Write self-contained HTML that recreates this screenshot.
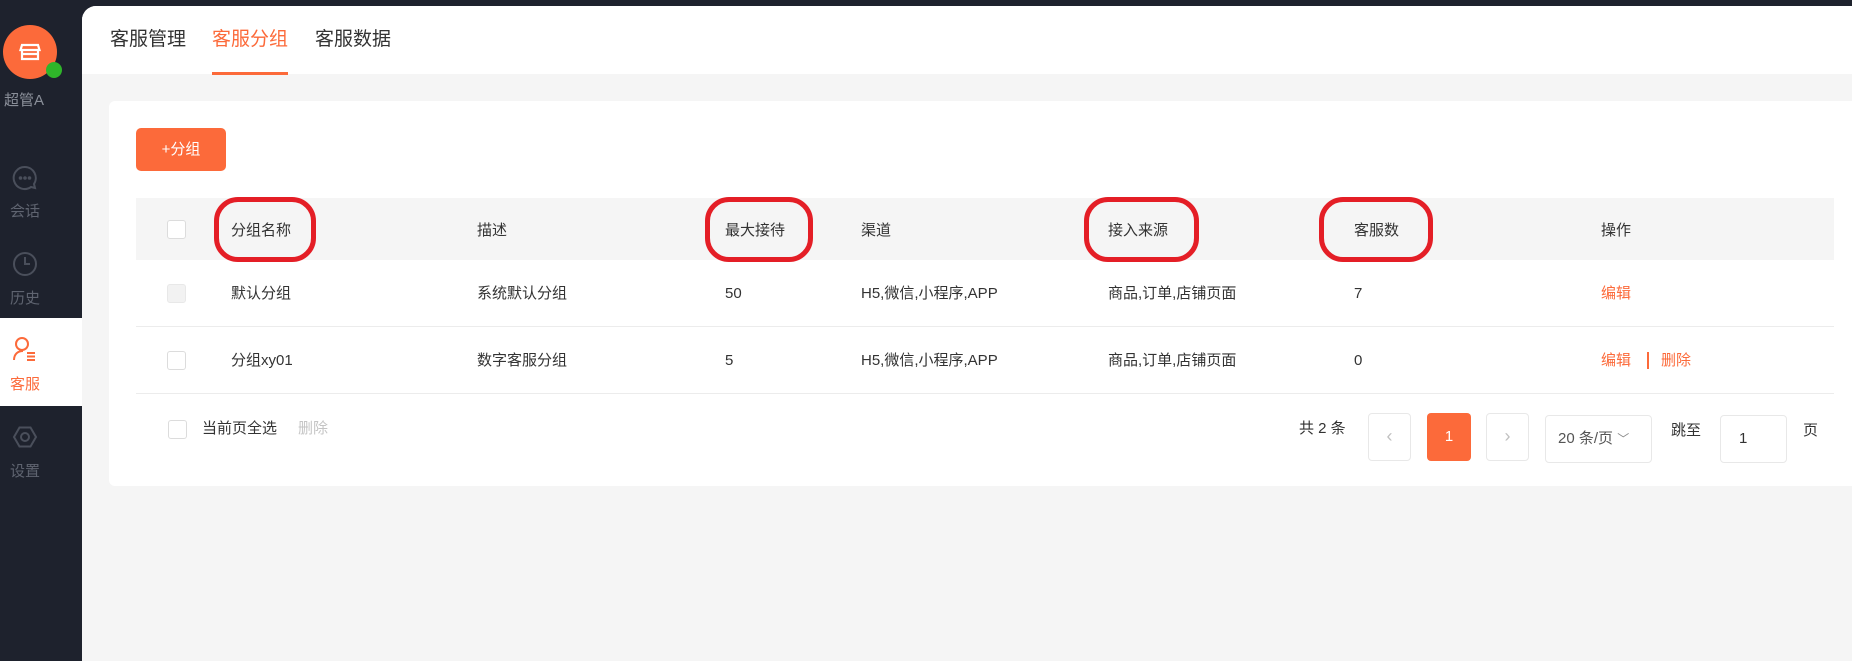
<!DOCTYPE html>
<html><head><meta charset="utf-8"><style>
*{margin:0;padding:0;box-sizing:border-box}
body{width:1852px;height:661px;overflow:hidden;background:#1e222d;font-family:"Liberation Sans","Noto Sans CJK SC",sans-serif;font-size:15px;line-height:22px;color:#333;position:relative}
.a{position:absolute;white-space:nowrap}
.main{position:absolute;left:82px;top:6px;width:1770px;height:655px;background:#f5f5f5;border-top-left-radius:14px;overflow:hidden}
.hdr{position:absolute;left:0;top:0;width:100%;height:68px;background:#fff}
.tab{position:absolute;top:20px;font-size:19px;line-height:28px;color:#333}
.card{position:absolute;left:109px;top:101px;width:1760px;height:385px;background:#fff;border-radius:6px}
.cb{position:absolute;width:19px;height:19px;border:1px solid #dcdcdc;border-radius:3px;background:#fff}
.circ{position:absolute;border:5px solid #e41e26;border-radius:24px}
.pb{position:absolute;border:1px solid #e8e8e8;border-radius:4px;background:#fff}
.side{position:absolute;left:0;width:82px;text-align:center;color:#5f6470;font-size:15px}
</style></head><body>
<div class="a" style="left:3px;top:25px;width:54px;height:54px;border-radius:50%;background:#fc6a3a"></div>
<svg class="a" style="left:18px;top:40px" width="24" height="24" viewBox="0 0 24 24" fill="none" stroke="#fff" stroke-width="2.2"><path d="M4 5h16l1.5 5H2.5z"/><path d="M4 10v9h16v-9M4 14h16"/></svg>
<div class="a" style="left:46px;top:62px;width:16px;height:16px;border-radius:50%;background:#2fb52a"></div>
<div class="a" style="left:4px;top:90px;color:#8a8f99;font-size:15px">超管A</div>
<svg class="a" style="left:12px;top:165px" width="26" height="26" viewBox="0 0 26 26" fill="none" stroke="#4a4f5b" stroke-width="2"><path d="M13 2a11 11 0 1 0 6 20l4 1-1-4A11 11 0 0 0 13 2z"/><circle cx="8.5" cy="13" r=".8" fill="#4a4f5b"/><circle cx="13" cy="13" r=".8" fill="#4a4f5b"/><circle cx="17.5" cy="13" r=".8" fill="#4a4f5b"/></svg>
<div class="side a" style="top:201px;left:-16px">会话</div>
<svg class="a" style="left:12px;top:251px" width="26" height="26" viewBox="0 0 26 26" fill="none" stroke="#4a4f5b" stroke-width="2"><circle cx="13" cy="13" r="11"/><path d="M13 6v7h5"/></svg>
<div class="side a" style="top:288px;left:-16px">历史</div>
<div class="a" style="left:0;top:318px;width:82px;height:88px;background:#fff"></div>
<svg class="a" style="left:12px;top:336px" width="26" height="26" viewBox="0 0 26 26" fill="none" stroke="#fc6a3a" stroke-width="2"><circle cx="10" cy="8" r="6"/><path d="M2 24c0-6 4-9 9-9"/><path d="M15 17h8M15 20.5h8M15 24h8"/></svg>
<div class="side a" style="top:374px;left:-16px;color:#fc6a3a">客服</div>
<svg class="a" style="left:12px;top:424px" width="26" height="26" viewBox="0 0 26 26" fill="none" stroke="#4a4f5b" stroke-width="2"><path d="M7.5 3.5h11L24 13l-5.5 9.5h-11L2 13z"/><circle cx="13" cy="13" r="4"/></svg>
<div class="side a" style="top:461px;left:-16px">设置</div>

<div class="main">
<div class="hdr">
<div class="tab" style="left:28px">客服管理</div>
<div class="tab" style="left:130px;color:#fc6a3a">客服分组</div>
<div class="tab" style="left:233px">客服数据</div>
<div class="a" style="left:130px;top:66px;width:76px;height:3px;background:#fc6a3a"></div>
</div>
</div>

<div class="card" style="left:109px"></div>
<div class="a" style="left:136px;top:128px;width:90px;height:43px;background:#fc6a3a;border-radius:5px;color:#fff;text-align:center;line-height:43px;font-size:15px">+分组</div>

<div class="a" style="left:136px;top:198px;width:1698px;height:62px;background:#f5f5f5"></div>
<div class="a" style="left:136px;top:326px;width:1698px;height:1px;background:#ececec"></div>
<div class="a" style="left:136px;top:393px;width:1698px;height:1px;background:#ececec"></div>

<div class="cb" style="left:167px;top:220px"></div>
<div class="cb" style="left:167px;top:284px;background:#f2f2f2;border-color:#e8e8e8"></div>
<div class="cb" style="left:167px;top:351px"></div>
<div class="cb" style="left:168px;top:420px"></div>

<div class="a" style="left:231px;top:220px">分组名称</div>
<div class="a" style="left:477px;top:220px">描述</div>
<div class="a" style="left:725px;top:220px">最大接待</div>
<div class="a" style="left:861px;top:220px">渠道</div>
<div class="a" style="left:1108px;top:220px">接入来源</div>
<div class="a" style="left:1354px;top:220px">客服数</div>
<div class="a" style="left:1601px;top:220px">操作</div>

<div class="a" style="left:231px;top:283px">默认分组</div>
<div class="a" style="left:477px;top:283px">系统默认分组</div>
<div class="a" style="left:725px;top:283px">50</div>
<div class="a" style="left:861px;top:283px">H5,微信,小程序,APP</div>
<div class="a" style="left:1108px;top:283px">商品,订单,店铺页面</div>
<div class="a" style="left:1354px;top:283px">7</div>
<div class="a" style="left:1601px;top:283px;color:#fc6a3a">编辑</div>

<div class="a" style="left:231px;top:350px">分组xy01</div>
<div class="a" style="left:477px;top:350px">数字客服分组</div>
<div class="a" style="left:725px;top:350px">5</div>
<div class="a" style="left:861px;top:350px">H5,微信,小程序,APP</div>
<div class="a" style="left:1108px;top:350px">商品,订单,店铺页面</div>
<div class="a" style="left:1354px;top:350px">0</div>
<div class="a" style="left:1601px;top:350px;color:#fc6a3a">编辑</div>
<div class="a" style="left:1647px;top:352px;width:2px;height:17px;background:#fc6a3a"></div>
<div class="a" style="left:1661px;top:350px;color:#fc6a3a">删除</div>

<div class="a" style="left:202px;top:418px">当前页全选</div>
<div class="a" style="left:298px;top:418px;color:#c4c4c4">删除</div>

<div class="a" style="left:1299px;top:418px">共 2 条</div>
<div class="pb" style="left:1368px;top:413px;width:43px;height:48px;color:#c0c0c0;text-align:center;line-height:44px;font-size:18px">‹</div>
<div class="a" style="left:1427px;top:413px;width:44px;height:48px;background:#fc6a3a;border-radius:4px;color:#fff;text-align:center;line-height:48px">1</div>
<div class="pb" style="left:1486px;top:413px;width:43px;height:48px;color:#c0c0c0;text-align:center;line-height:44px;font-size:18px">›</div>
<div class="pb" style="left:1545px;top:415px;width:107px;height:48px;line-height:46px;padding-left:12px;color:#555">20 条/页 <span style="font-size:12px;color:#888">﹀</span></div>
<div class="a" style="left:1671px;top:420px">跳至</div>
<div class="pb" style="left:1720px;top:415px;width:67px;height:48px;line-height:46px;padding-left:18px">1</div>
<div class="a" style="left:1803px;top:420px">页</div>

<div class="circ" style="left:214px;top:197px;width:102px;height:65px"></div>
<div class="circ" style="left:705px;top:197px;width:108px;height:65px"></div>
<div class="circ" style="left:1084px;top:197px;width:115px;height:65px"></div>
<div class="circ" style="left:1319px;top:197px;width:114px;height:65px"></div>
</body></html>
